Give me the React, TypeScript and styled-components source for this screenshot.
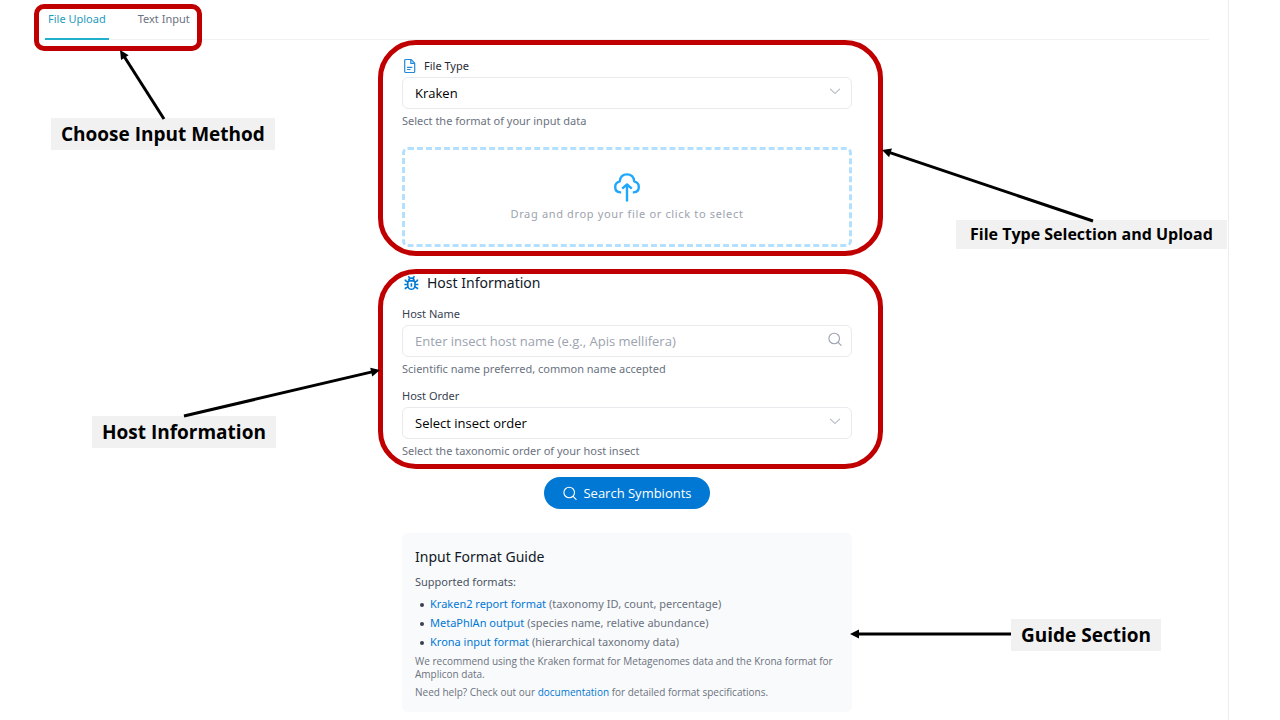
import React from 'react';
import styled, { createGlobalStyle } from 'styled-components';

const GlobalStyle = createGlobalStyle`
  * { box-sizing: border-box; }
  body {
    margin: 0;
    background: #fff;
    font-family: 'Noto Sans', 'Open Sans', sans-serif;
    font-size: 11px;
    color: #374151;
  }
  button, input, select { font-family: inherit; }
`;

const Page = styled.div`
  min-height: 100vh;
  margin-right: 51px;
  padding: 0 19px 8px 45px;
  border-right: 1px solid #ebedf0;
`;

const TabBar = styled.nav`
  position: relative;
  display: flex;
  gap: 26px;
  height: 40px;
  border-bottom: 1px solid #f0f1f3;
`;

const Tab = styled.button<{ $active?: boolean }>`
  height: 40px;
  padding: 0 3px 2px;
  border: 0;
  border-bottom: 2px solid ${(p) => (p.$active ? '#1fb0cc' : 'transparent')};
  background: none;
  font-size: 11px;
  color: ${(p) => (p.$active ? '#1f9bbd' : '#6b7280')};
`;

const Column = styled.main`
  max-width: 450px;
  margin: 0 auto;
  padding-top: 17px;
`;

const Section = styled.section<{ $gap?: number }>`
  position: relative;
  margin-top: ${(p) => p.$gap ?? 0}px;
`;

const FieldLabel = styled.label`
  display: flex;
  align-items: center;
  gap: 8px;
  margin-bottom: 2px;
  line-height: 18px;
`;

const TypeLabel = styled(FieldLabel)`
  color: #1f2937;
`;

const Field = styled.div`
  & + & { margin-top: 10px; }
`;

const Control = styled.div`
  display: grid;
  align-items: center;
  > * { grid-area: 1 / 1; }
`;

const controlBox = `
  width: 100%;
  height: 32px;
  padding: 0 36px 0 12px;
  border: 1px solid #e8eaed;
  border-radius: 6px;
  outline: 0;
  background: #fff;
  font-size: 13px;
  color: #000;
`;

const Select = styled.select`
  ${controlBox}
  font-family: 'Open Sans', 'Noto Sans', sans-serif;
  appearance: none;
`;

const Input = styled.input`
  ${controlBox}
  font-family: 'Open Sans', 'Noto Sans', sans-serif;
  &::placeholder { color: #9ca3af; opacity: 1; }
`;

const ControlIcon = styled.span`
  display: flex;
  justify-self: end;
  padding: 0 10px 4px 0;
  color: #9ca3af;
  pointer-events: none;
`;

const Help = styled.p`
  margin: 4px 0 0;
  line-height: 16px;
  color: #6b7280;
`;

const DropZone = styled.button`
  display: flex;
  flex-direction: column;
  align-items: center;
  justify-content: center;
  gap: 4px;
  width: 100%;
  height: 100px;
  margin-top: 18px;
  border: 3px dashed #b3e0ff;
  border-radius: 6px;
  background: #fff;
  font-size: 11px;
  line-height: 16px;
  letter-spacing: 0.06em;
  color: #9ca3af;
`;

const Heading = styled.h2`
  display: flex;
  align-items: center;
  gap: 7px;
  margin: 0 0 12px;
  font-size: 14px;
  font-weight: 400;
  line-height: 20px;
  color: #111827;
`;

const SearchButton = styled.button`
  display: flex;
  align-items: center;
  gap: 6px;
  height: 32px;
  margin: 18px auto 0;
  padding: 0 18px;
  border: 0;
  border-radius: 16px;
  background: #0078d4;
  font-family: 'Open Sans', 'Noto Sans', sans-serif;
  font-size: 13px;
  color: #fff;
`;

const Guide = styled(Section)`
  padding: 14px 13px 13px;
  border-radius: 6px;
  background: #f9fafb;
  color: #6b7280;
`;

const GuideTitle = styled.h3`
  margin: 0 0 7px;
  font-size: 14px;
  font-weight: 400;
  line-height: 20px;
  color: #111827;
`;

const Supported = styled.p`
  margin: 0 0 4px;
  line-height: 16px;
  color: #4b5563;
`;

const FormatList = styled.ul`
  margin: 0 0 4px;
  padding: 0;
  line-height: 19px;
  list-style: none;
`;

const FormatItem = styled.li`
  &::before {
    content: '';
    display: inline-block;
    width: 4px;
    height: 4px;
    margin: 0 6px 0 5px;
    border-radius: 50%;
    background: #374151;
    vertical-align: middle;
  }
`;

const Note = styled.p`
  margin: 0;
  font-family: 'Open Sans', 'Noto Sans', sans-serif;
  font-size: 10px;
  line-height: 13px;
  & + & { margin-top: 5px; }
`;

const Link = styled.a`
  color: #0078d4;
  text-decoration: none;
`;

const Frame = styled.div<{ $inset: string }>`
  position: absolute;
  inset: ${(p) => p.$inset};
  border: 5px solid #c00000;
  border-radius: 38px;
  pointer-events: none;
`;

const TabFrame = styled.div`
  position: absolute;
  top: 4px;
  left: -11px;
  width: 168px;
  height: 47px;
  border: 5px solid #c00000;
  border-radius: 10px;
  pointer-events: none;
`;

type Spot = { $top: number; $left: number };

const Callout = styled.div<Spot & { $small?: boolean }>`
  position: absolute;
  top: ${(p) => p.$top}px;
  left: ${(p) => p.$left}px;
  padding: 0 ${(p) => (p.$small ? 14 : 10)}px;
  background: #f1f1f1;
  font-family: 'Open Sans', 'Noto Sans', sans-serif;
  font-size: ${(p) => (p.$small ? 16 : 19)}px;
  font-weight: 700;
  line-height: ${(p) => (p.$small ? 29 : 32)}px;
  white-space: nowrap;
  color: #000;
`;

const ArrowSvg = styled.svg<Spot>`
  position: absolute;
  top: ${(p) => p.$top}px;
  left: ${(p) => p.$left}px;
  overflow: visible;
  pointer-events: none;
`;

/* Arrow from the svg origin to (dx, dy), head at the far end. */
function Arrow({ top, left, dx, dy }: { top: number; left: number; dx: number; dy: number }) {
  const angle = (Math.atan2(dy, dx) * 180) / Math.PI;
  const len = Math.hypot(dx, dy);
  return (
    <ArrowSvg $top={top} $left={left} width="1" height="1" aria-hidden="true">
      <g transform={`rotate(${angle})`}>
        <path d={`M0 0H${len - 6}`} stroke="#000" strokeWidth="3" />
        <path d={`M${len} 0l-9-4.5v9z`} fill="#000" />
      </g>
    </ArrowSvg>
  );
}

const SearchIcon = () => (
  <svg width="15" height="15" viewBox="0 0 15 15" fill="none" stroke="currentColor" strokeWidth="1.1" strokeLinecap="round" aria-hidden="true">
    <circle cx="7.2" cy="6.5" r="5.3" />
    <path d="M11.1 10.400L14.100 13.400" />
  </svg>
);

const ChevronIcon = () => (
  <svg width="14" height="14" viewBox="0 0 1024 1024" fill="currentColor" aria-hidden="true">
    <path d="M831.872 340.864 512 652.672 192.128 340.864a30.592 30.592 0 0 0-42.752 0 29.12 29.12 0 0 0 0 41.6L489.664 714.24a32 32 0 0 0 44.672 0l340.288-331.712a29.12 29.12 0 0 0 0-41.728 30.592 30.592 0 0 0-42.752 0z" />
  </svg>
);

const FileIcon = () => (
  <svg width="14" height="16" viewBox="0 0 14 16" fill="none" stroke="#2288da" strokeWidth="1.2" strokeLinejoin="round" aria-hidden="true">
    <path d="M3.700 1.500H9l3.700 3.700v8.300a1 1 0 0 1-1 1h-8a1 1 0 0 1-1-1v-11a1 1 0 0 1 1-1z" />
    <path d="M8.800 1.800v3.600h3.600M5 9.300h5.300M5 11.500h3.500" />
  </svg>
);

const BugIcon = () => (
  <svg width="18" height="16" viewBox="0 0 18 16" fill="none" stroke="#0078d4" strokeWidth="1.6" aria-hidden="true">
    <path d="M6.300 1.200L7.900 3.200M12.500 1.200L10.900 3.200M6.700 5.700C6.700 4 7.800 3.100 9.400 3.100s2.700.900 2.700 2.600" />
    <path d="M7.600 5.900h3.600a2 2 0 0 1 1.800 2v2.500a3.600 3.900 0 0 1-7.200 0V7.900a2 2 0 0 1 1.800-2zM9.400 8.200v3.600" />
    <path d="M3.400 4.600v1l2.600 1.600M15.400 4.600v1L12.800 7.200M2.400 9.500h3.400M13 9.500h3.400M3.400 14.200v-1l2.800-1.400M15.400 14.200v-1l-2.800-1.400" />
  </svg>
);

const CloudIcon = () => (
  <svg width="28" height="30" viewBox="0 0 28 30" fill="none" stroke="#1ea7fd" strokeWidth="2.400" strokeLinejoin="round" aria-hidden="true">
    <path d="M8.200 20.400H7.400C4 20.200 2.200 17.800 2.200 15c0-2.800 1.800-4.900 4.500-5.600C7.200 5.200 10 2.400 14 2.400s6.800 2.800 7.300 7c2.700.700 4.500 2.800 4.500 5.600 0 2.800-1.800 5.200-5.200 5.400H19.800M14 29.500V13M9.200 16.600L14 12.400l4.800 4.200" />
  </svg>
);

export default function App() {
  return (
    <>
      <GlobalStyle />
      <Page>
        <TabBar>
          <Tab type="button" $active>File Upload</Tab>
          <Tab type="button">Text Input</Tab>
          <TabFrame />
          <Callout $top={118} $left={6}>Choose Input Method</Callout>
          <Arrow top={119} left={119} dx={-44} dy={-69} />
        </TabBar>
        <Column>
          <Section>
            <TypeLabel htmlFor="file-type"><FileIcon />File Type</TypeLabel>
            <Control>
              <Select id="file-type"><option>Kraken</option></Select>
              <ControlIcon><ChevronIcon /></ControlIcon>
            </Control>
            <Help>Select the format of your input data</Help>
            <DropZone type="button">
              <CloudIcon />
              Drag and drop your file or click to select
            </DropZone>
            <Frame $inset="-17px -31px -9px -24px" />
            <Callout $small $top={163} $left={554}>File Type Selection and Upload</Callout>
            <Arrow top={164} left={691} dx={-211} dy={-71} />
          </Section>
          <Section $gap={26}>
            <Heading><BugIcon />Host Information</Heading>
            <Field>
              <FieldLabel htmlFor="host-name">Host Name</FieldLabel>
              <Control>
                <Input id="host-name" type="text" placeholder="Enter insect host name (e.g., Apis mellifera)" />
                <ControlIcon><SearchIcon /></ControlIcon>
              </Control>
              <Help>Scientific name preferred, common name accepted</Help>
            </Field>
            <Field>
              <FieldLabel htmlFor="host-order">Host Order</FieldLabel>
              <Control>
                <Select id="host-order"><option>Select insect order</option></Select>
                <ControlIcon><ChevronIcon /></ControlIcon>
              </Control>
              <Help>Select the taxonomic order of your host insect</Help>
            </Field>
            <Frame $inset="-4px -31px -10px -24px" />
            <Callout $top={143} $left={-310}>Host Information</Callout>
            <Arrow top={143} left={-218} dx={196} dy={-46} />
          </Section>
          <SearchButton type="button"><SearchIcon />Search Symbionts</SearchButton>
          <Guide $gap={24}>
            <GuideTitle>Input Format Guide</GuideTitle>
            <Supported>Supported formats:</Supported>
            <FormatList>
              <FormatItem><Link href="#kraken2">Kraken2 report format</Link> (taxonomy ID, count, percentage)</FormatItem>
              <FormatItem><Link href="#metaphlan">MetaPhlAn output</Link> (species name, relative abundance)</FormatItem>
              <FormatItem><Link href="#krona">Krona input format</Link> (hierarchical taxonomy data)</FormatItem>
            </FormatList>
            <Note>We recommend using the Kraken format for Metagenomes data and the Krona format for Amplicon data.</Note>
            <Note>Need help? Check out our <Link href="#documentation">documentation</Link> for detailed format specifications.</Note>
            <Callout $top={86} $left={609}>Guide Section</Callout>
            <Arrow top={101} left={609} dx={-161} dy={0} />
          </Guide>
        </Column>
      </Page>
    </>
  );
}
